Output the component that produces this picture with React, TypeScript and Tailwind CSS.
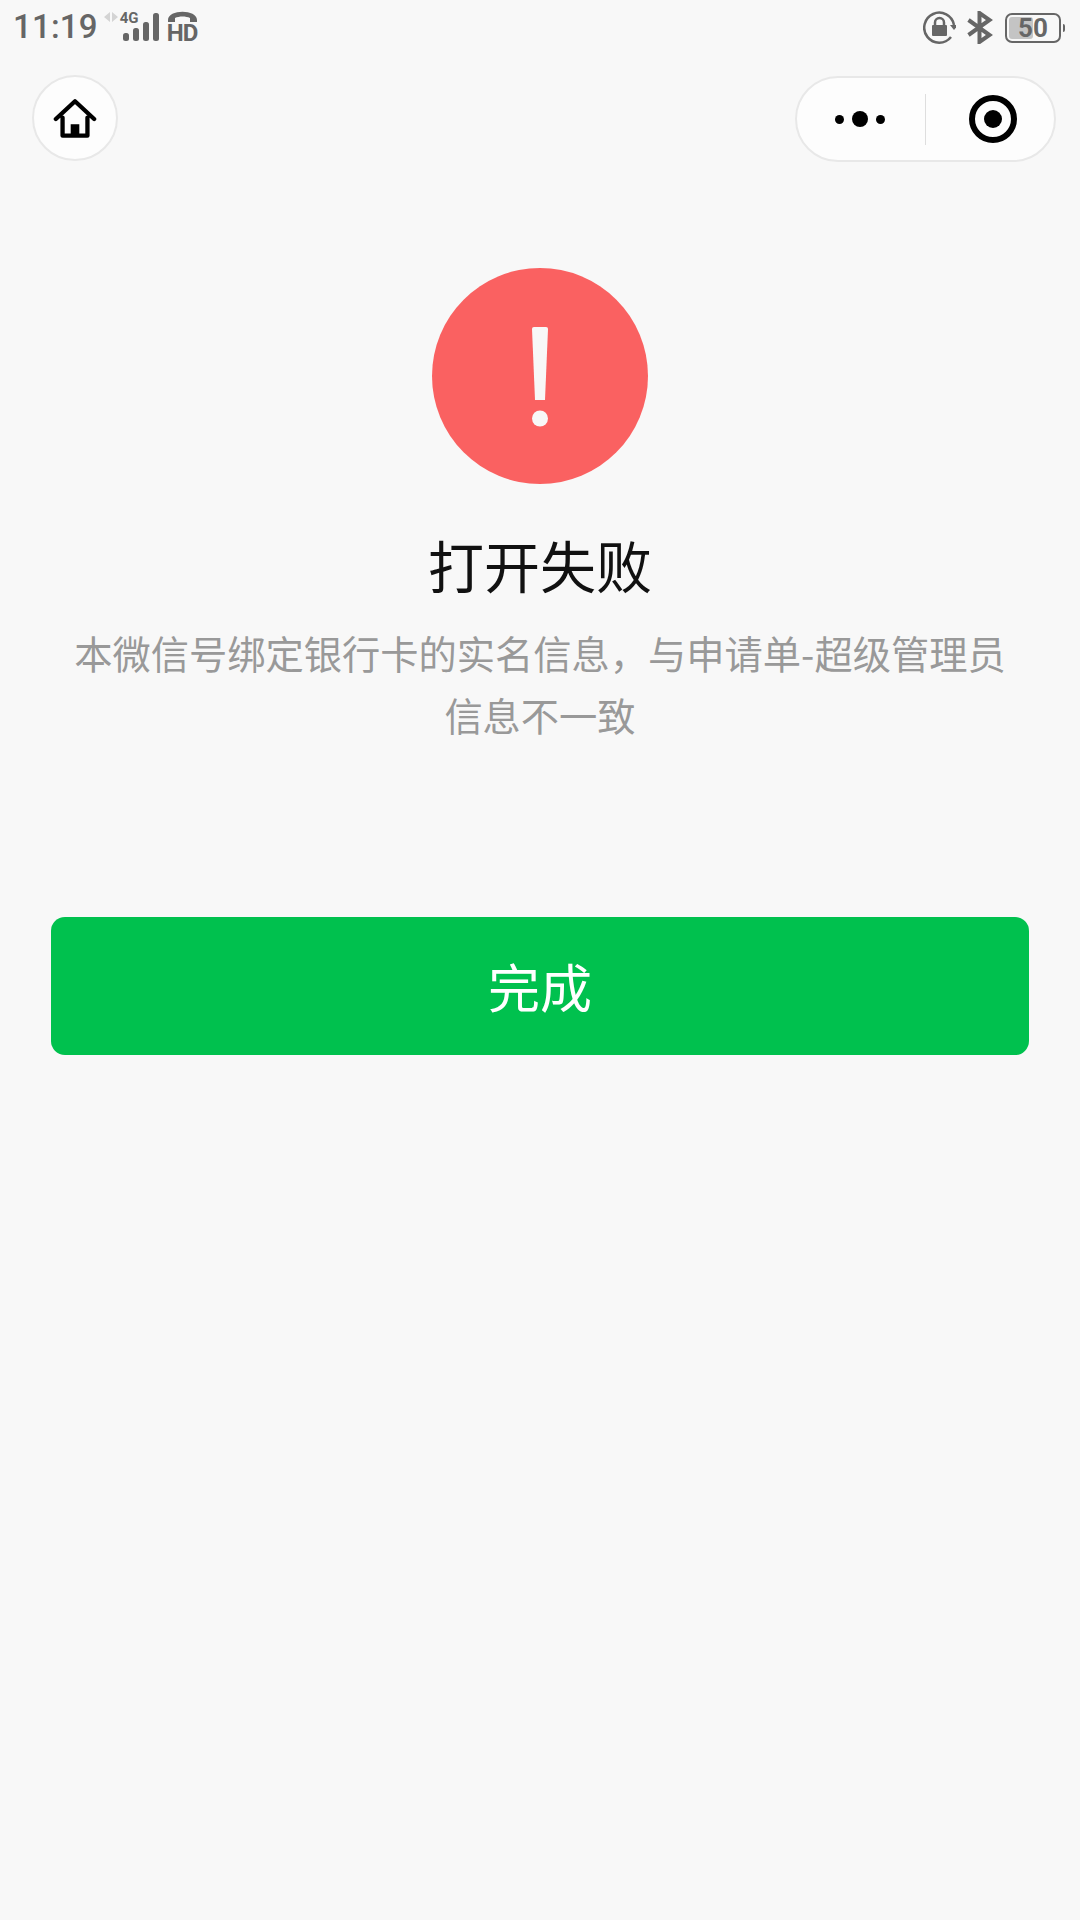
function SignalIcon() {
  return (
    <div className="relative ml-[6px] h-[32px] w-[56px]">
      <svg width="56" height="32" viewBox="0 0 56 32" className="absolute top-0 left-0">
        <path d="M6 1v10L0 6zM8 1v10l6-5z" fill="#d4d4d4" />
        <rect x="19" y="22" width="6" height="8" rx="2.500" fill="#666" />
        <rect x="29" y="17" width="6" height="13" rx="2.500" fill="#666" />
        <rect x="39" y="11" width="6" height="19" rx="2.500" fill="#666" />
        <rect x="49" y="2" width="6" height="28" rx="2.500" fill="#666" />
      </svg>
      <span className="absolute top-[2px] left-[16px] font-['Roboto',sans-serif] text-[15px] leading-[11px] font-bold text-[#666]">
        4G
      </span>
    </div>
  );
}

function HdIcon() {
  return (
    <div className="relative ml-[7px] h-[32px] w-[31px]">
      <svg width="31" height="12" viewBox="0 0 31 12" className="absolute top-0 left-0">
        <path d="M1 9C1 -2 30 -2 30 9v2h-7V7C19 5 12 5 8 7v4H1z" fill="#666" />
      </svg>
      <span className="absolute top-[14px] left-0 font-['Roboto',sans-serif] text-[24px] leading-[17px] font-bold tracking-[-1px] text-[#666]">
        HD
      </span>
    </div>
  );
}

function LockRotateIcon() {
  return (
    <svg width="33" height="33" viewBox="0 0 33 33">
      <path d="M28 26A15 15 0 1 1 31 14" fill="none" stroke="#666" strokeWidth="2.500" />
      <path d="M27 14h8l-4 5z" fill="#666" />
      <rect x="9" y="14" width="15" height="11" rx="1" fill="#666" />
      <path d="M12 15v-3.500a4.500 4.500 0 0 1 9 0V15" fill="none" stroke="#666" strokeWidth="2.500" />
    </svg>
  );
}

function BluetoothIcon() {
  return (
    <svg width="26" height="33" viewBox="0 0 26 33" className="ml-[11px]">
      <path d="M1.500 9l21 15-10 7V2l10 7-21 15" fill="none" stroke="#666" strokeWidth="4" />
    </svg>
  );
}

function BatteryIcon() {
  return (
    <div className="ml-[12px] flex items-center">
      <div className="relative flex h-[30px] w-[56px] items-center justify-center rounded-[7px] border-2 border-[#666]">
        <div className="absolute top-[2px] bottom-[2px] left-[2px] w-[24px] rounded-[3px] bg-[#c4c4c4]" />
        <span className="relative font-['Roboto',sans-serif] text-[26px] leading-none font-bold text-[#666]">
          50
        </span>
      </div>
      <div className="ml-[2px] h-[8px] w-[2px] rounded-r-sm bg-[#666]" />
    </div>
  );
}

function StatusBar() {
  return (
    <div className="flex h-[75px] items-start justify-between pt-[11px] pr-[15px] pl-[13px]">
      <div className="flex items-center">
        <span className="font-['Roboto',sans-serif] text-[33px] leading-[32px] font-medium tracking-[0.2px] text-[#666]">
          11:19
        </span>
        <SignalIcon />
        <HdIcon />
      </div>
      <div className="flex items-center">
        <LockRotateIcon />
        <BluetoothIcon />
        <BatteryIcon />
      </div>
    </div>
  );
}

function HomeButton() {
  return (
    <button className="flex size-[86px] items-center justify-center rounded-full border-2 border-[#e8e8e8] bg-[#fdfdfd]">
      <svg width="44" height="41" viewBox="0 0 46 42">
        <path
          d="M3 21.500L23 3l20 18.500M10 20v19h26V20"
          fill="none"
          stroke="#000"
          strokeWidth="4.500"
          strokeLinejoin="round"
          strokeLinecap="round"
        />
        <rect x="18.500" y="27" width="9" height="12" fill="#000" />
      </svg>
    </button>
  );
}

function Capsule() {
  return (
    <div className="mt-px flex h-[86px] w-[261px] items-center rounded-full border-2 border-[#e8e8e8] bg-[#fdfdfd]">
      <div className="flex w-[128px] items-center justify-center gap-[8px] pr-[2px]">
        <span className="size-[9px] rounded-full bg-black" />
        <span className="size-[16px] rounded-full bg-black" />
        <span className="size-[9px] rounded-full bg-black" />
      </div>
      <div className="h-[51px] w-px bg-[#dedede]" />
      <div className="flex flex-1 items-center justify-center pl-[5px]">
        <svg width="48" height="48" viewBox="0 0 48 48">
          <circle cx="24" cy="24" r="21" fill="none" stroke="#000" strokeWidth="6" />
          <circle cx="24" cy="24" r="9" fill="#000" />
        </svg>
      </div>
    </div>
  );
}

export default function App() {
  return (
    <div className="flex min-h-[1920px] flex-col bg-[#f8f8f8] font-['Noto_Sans_CJK_SC','Noto_Sans',sans-serif]">
      <StatusBar />
      <div className="flex items-start justify-between pr-[24px] pl-[32px]">
        <HomeButton />
        <Capsule />
      </div>

      <div className="mt-[106px] flex flex-col items-center px-[51px]">
        <div className="flex size-[216px] items-center justify-center rounded-full bg-[#fa6161]">
          <svg width="16" height="100" viewBox="0 0 16 100" className="mt-[2px]">
            <path d="M0 2a2 2 0 0 1 2-2h12a2 2 0 0 1 2 2l-3 71H3z" fill="#f8f8f8" />
            <circle cx="8" cy="91.500" r="8" fill="#f8f8f8" />
          </svg>
        </div>
        <h1 className="mt-[42px] text-[56px] leading-[76px] font-normal text-[#111]">打开失败</h1>
        <p className="mt-[20px] w-[940px] text-center text-[38.25px] leading-[62px] text-[#999]">
          本微信号绑定银行卡的实名信息，与申请单-超级管理员信息不一致
        </p>
        <button className="mt-[171px] h-[138px] w-full rounded-[14px] bg-[#00c14e] text-[52px] text-white">
          完成
        </button>
      </div>
    </div>
  );
}
